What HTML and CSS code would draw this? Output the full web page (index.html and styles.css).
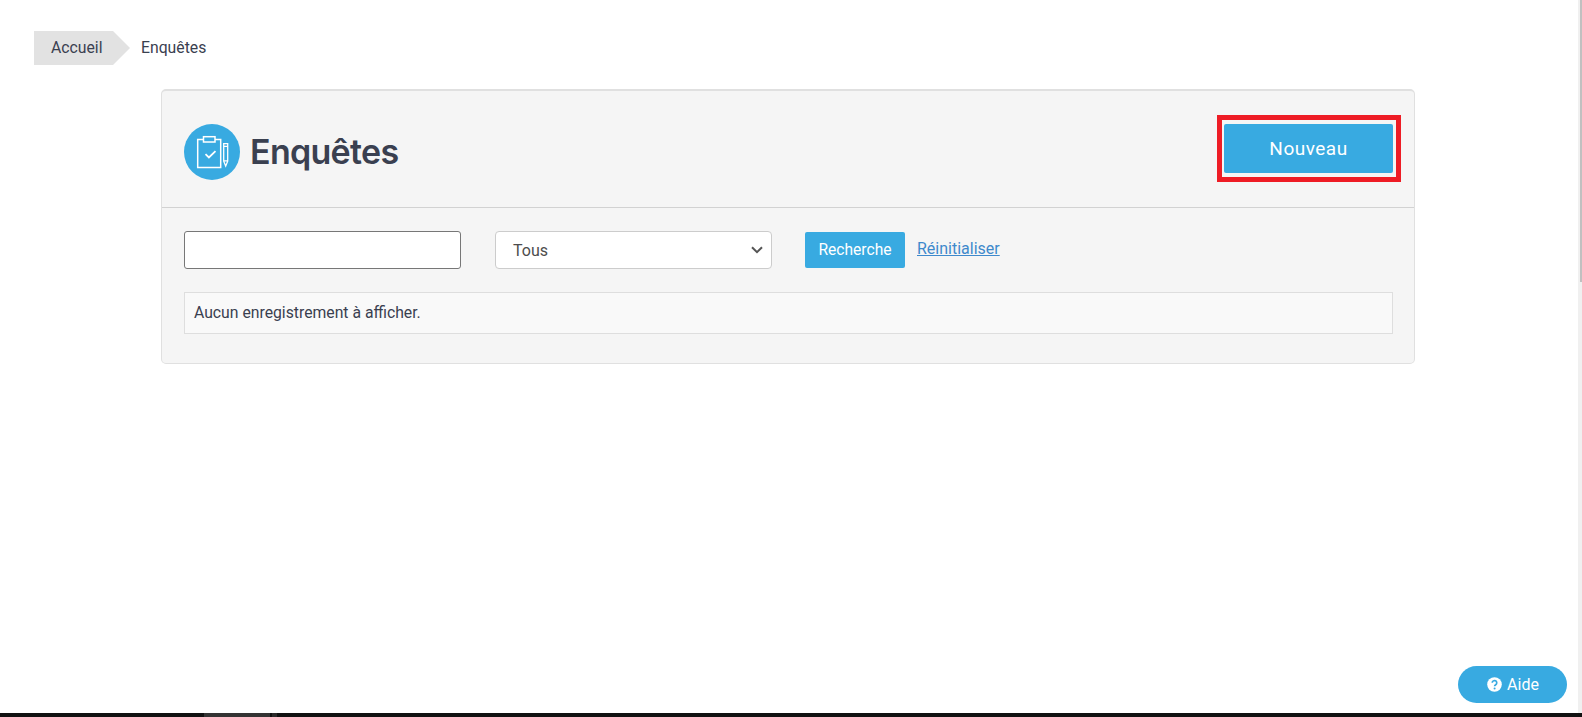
FILE: index.html
```html
<!DOCTYPE html>
<html lang="fr">
<head>
<meta charset="utf-8">
<title>Enquêtes</title>
<link rel="stylesheet" href="styles.css">
</head>
<body>
<div class="screen">
  <div class="viewport">
    <main class="page">
      <nav class="crumbs">
        <a class="crumb-home">Accueil</a>
        <span class="crumb-current">Enquêtes</span>
      </nav>
      <section class="panel">
        <header class="panel-head">
          <div class="title-group">
            <span class="title-icon">
              <svg viewBox="0 0 56 56" width="56" height="56" fill="none" stroke="#fff" stroke-width="1.5">
                <path d="M19.5 15.5h-5.8v28h23v-28H31"/>
                <rect x="19.5" y="12.7" width="11.5" height="5.3"/>
                <path d="M21.5 30.2l3.4 3.2 6.6-6.2" stroke-width="1.8"/>
                <path d="M39.7 19.7h4v17.5l-2 4.8-2-4.8zM39.7 22.3h4M39.7 36.8h4" stroke-width="1.3"/>
              </svg>
            </span>
            <h1 class="title">Enquêtes</h1>
          </div>
          <div class="highlight">
            <button class="btn btn-new" type="button">Nouveau</button>
          </div>
        </header>
        <div class="panel-body">
          <form class="filters">
            <input class="field field-text" type="text" aria-label="Recherche">
            <div class="field field-select">
              <span>Tous</span>
              <svg viewBox="0 0 12 8" width="12" height="8" fill="none" stroke="#555" stroke-width="2"><path d="M1 1.2l5 5 5-5"/></svg>
            </div>
            <button class="btn btn-search" type="button">Recherche</button>
            <a class="reset" href="#">Réinitialiser</a>
          </form>
          <div class="notice">Aucun enregistrement à afficher.</div>
        </div>
      </section>
    </main>
    <aside class="scrollbar"><div class="scroll-thumb"></div></aside>
  </div>
  <div class="taskbar">
    <span class="task-a"></span>
    <span class="task-b"></span>
  </div>
  <button class="help" type="button">
    <svg viewBox="0 0 16 16" width="15" height="15"><circle cx="8" cy="8" r="7.8" fill="#fff"/><path d="M5.6 6.2a2.4 2.4 0 1 1 3.7 2c-.8.5-1.2.8-1.2 1.6" fill="none" stroke="#38aae1" stroke-width="1.8"/><circle cx="8.1" cy="12.2" r="1.1" fill="#38aae1"/></svg>
    <span>Aide</span>
  </button>
</div>
</body>
</html>
```
FILE: styles.css
```css
* { box-sizing: border-box; }
html, body { margin: 0; height: 100%; overflow: hidden; }
body { font-family: Roboto, "Liberation Sans", sans-serif; font-size: 15.75px; color: #3a4050; background: #fff; }

.screen { height: 717px; display: flex; flex-direction: column; }
.viewport { flex: 1; min-height: 0; display: flex; }
.page { flex: 1; min-width: 0; padding: 31px 0 0 34px; }
.scrollbar { width: 4px; background: #f0f0f0; padding-left: 2px; }
.scroll-thumb { height: 282px; background: #c0c0c0; }

.crumbs { display: flex; align-items: center; height: 34px; }
.crumb-home {
  width: 96px; height: 34px; padding-left: 17px; line-height: 34px; background: #e2e2e2; color: #3a4050;
  clip-path: polygon(0 0, 79px 0, 96px 50%, 79px 100%, 0 100%);
}
.crumb-current { margin-left: 11px; padding-bottom: 2px; }

.panel {
  width: 1254px; margin: 24px 0 0 127px; background: #f5f5f5;
  border: 1px solid #e0e0e0; border-top-width: 2px; border-radius: 5px;
}
.panel-head {
  height: 117px; padding: 24px 16px 0 22px; display: flex; justify-content: space-between; align-items: flex-start;
  border-bottom: 1px solid #d2d2d2;
}
.title-group { display: flex; align-items: center; gap: 10px; margin-top: 9px; }
.title-icon { width: 56px; height: 56px; border-radius: 50%; background: #38aae1; display: block; }
.title-icon svg { display: block; }
.title { margin: 0; font-family: Inter, Roboto, sans-serif; font-size: 34px; font-weight: 560; letter-spacing: -.7px; line-height: 56px; color: #3a4050; }

.highlight { border: 5px solid #ee1c25; padding: 4px 3px 4px 2px; margin-right: -3px; height: 67px; width: 184px; }
.btn { border: 0; color: #fff; background: #38aae1; border-radius: 2px; font-family: inherit; padding: 0; }
.btn-new { display: block; width: 169px; height: 49px; font-size: 19px; letter-spacing: .5px; }

.panel-body { padding: 23px 22px 29px 22px; }
.filters { display: flex; align-items: flex-start; height: 38px; }
.field { height: 38px; background: #fff; border-radius: 4px; }
.field-text { width: 277px; border: 1px solid #777; border-radius: 3px; padding: 0 12px; }
.field-select {
  width: 277px; margin-left: 34px; padding: 0 8px 0 17px; border: 1px solid #ccc;
  display: flex; align-items: center; justify-content: space-between; font-size: 16px; color: #4d4d4d;
}
.btn-search { width: 100px; height: 36px; margin: 1px 0 0 33px; font-size: 15.6px; }
.reset { margin: 8px 0 0 12px; font-size: 16px; color: #3e89cc; text-decoration: underline; }
.notice {
  margin-top: 23px; height: 42px; padding-left: 9px; line-height: 39px; background: #f9f9f9; border: 1px solid #dedede;
  width: 1209px; color: #3a4050;
}

.taskbar { height: 4px; flex: none; background: #111; padding-left: 204px; display: flex; gap: 2px; }
.task-a { width: 66px; background: #333; }
.task-b { width: 5px; background: #2a2a2a; }

.help {
  position: fixed; left: 1458px; top: 666px; width: 109px; height: 37px; border: 0; border-radius: 19px;
  background: #38aae1; color: #fff; font-family: inherit; font-size: 16px;
  display: flex; align-items: center; justify-content: center; gap: 5px; padding: 0 0 0 1px;
}
```
